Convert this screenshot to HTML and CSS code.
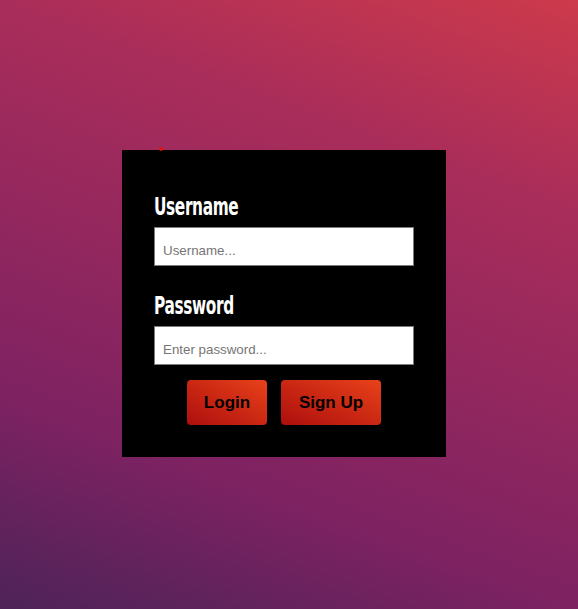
FILE: index.html
```html
<!DOCTYPE html>
<html>
<head>
<meta charset="utf-8">
<link rel="stylesheet" href="styles.css">
</head>
<body>
<div class="page">
  <form class="card">
    <span class="dot"></span>
    <label class="label" for="u"><span class="label-text">Username</span></label>
    <input class="field" id="u" type="text" placeholder="Username...">
    <label class="label label-second" for="p"><span class="label-text">Password</span></label>
    <input class="field" id="p" type="password" placeholder="Enter password...">
    <div class="actions">
      <button type="button" class="btn btn-login">Login</button>
      <button type="button" class="btn btn-signup">Sign Up</button>
    </div>
  </form>
</div>
</body>
</html>
```
FILE: styles.css
```css
html, body {
  margin: 0;
  padding: 0;
  height: 100%;
}
body {
  background: linear-gradient(20deg, #4d2358 0%, #7e2262 26%, #a92d5a 74%, #cd3a4b 100%);
  font-family: "Liberation Sans", Arial, sans-serif;
}
.page {
  min-height: 100vh;
  display: flex;
  align-items: center;
  justify-content: center;
  padding-right: 10px;
  padding-bottom: 2px;
  box-sizing: border-box;
}
.card {
  position: relative;
  width: 324px;
  box-sizing: border-box;
  background: #000;
  padding: 43px 32px 32px;
  display: flex;
  flex-direction: column;
}
.dot {
  position: absolute;
  top: -3px;
  left: 37px;
  width: 4px;
  height: 4px;
  border-radius: 50%;
  background: #e0140f;
}
.label {
  display: block;
  color: #fff;
  font-family: "DejaVu Sans Condensed", "DejaVu Sans", sans-serif;
  font-weight: bold;
  font-size: 24px;
  line-height: 28px;
  margin-bottom: 6px;
}
.label-text {
  display: inline-block;
  letter-spacing: -0.5px;
  transform: scaleX(0.71);
  transform-origin: left center;
}
.label-second {
  margin-top: 26px;
}
.field {
  box-sizing: border-box;
  width: 260px;
  height: 39px;
  margin: 0;
  border: 1px solid #7a7a7a;
  background: #fff;
  padding: 12px 8px 5px 8px;
  font-family: "Liberation Sans", Arial, sans-serif;
  font-size: 13.33px;
  color: #000;
  outline: none;
}
.field::placeholder {
  color: #757575;
}
.actions {
  display: flex;
  justify-content: center;
  gap: 14px;
  margin-top: 15px;
}
.btn {
  height: 45px;
  padding: 0;
  border: none;
  border-radius: 4px;
  background: linear-gradient(to top right, #ad0f0d, #e8411a);
  color: #000;
  font-family: "Liberation Sans", Arial, sans-serif;
  font-weight: bold;
  font-size: 17px;
  cursor: pointer;
}
.btn-login {
  width: 80px;
}
.btn-signup {
  width: 100px;
}
```
